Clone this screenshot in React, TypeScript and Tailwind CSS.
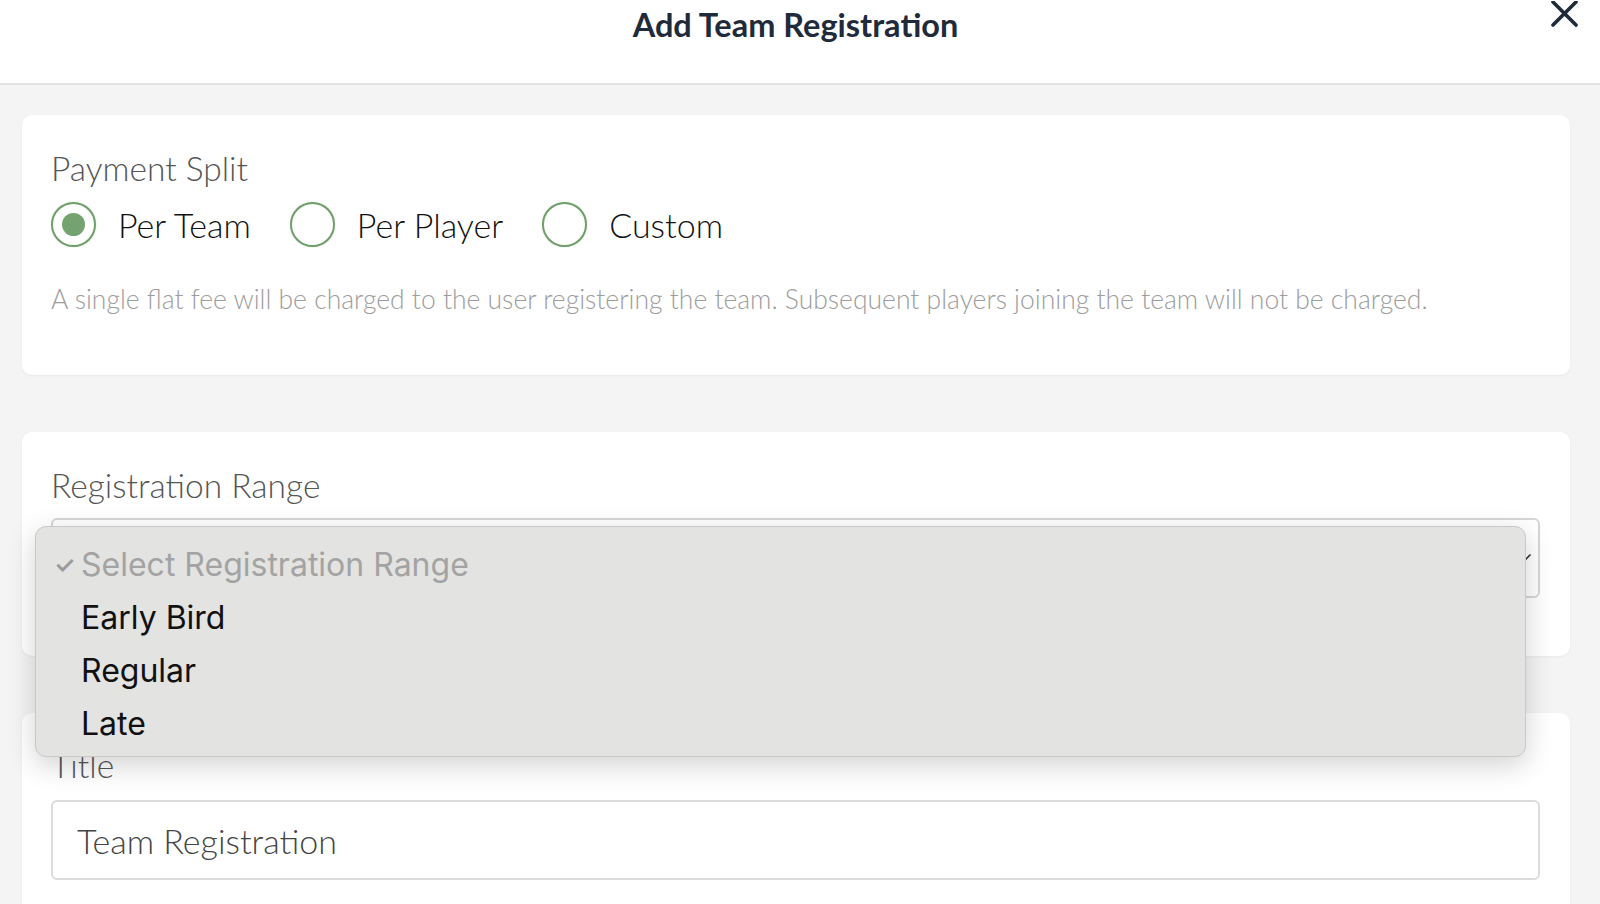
import React from "react";

function Radio({ checked, label }: { checked?: boolean; label: string }) {
  return (
    <div className="flex items-center gap-[22px]">
      <div className="w-[45px] h-[45px] rounded-full border-2 border-[#6f9f69] bg-white flex items-center justify-center shadow-[0_0_2px_rgba(0,0,0,0.15)]">
        {checked && <div className="w-[23px] h-[23px] rounded-full bg-[#74a36f]" />}
      </div>
      <span className="text-[34px] leading-[40px] text-[#111] font-light">{label}</span>
    </div>
  );
}

export default function App() {
  return (
    <div
      className="w-[1600px] h-[904px] overflow-hidden bg-[#f4f4f4] relative"
      style={{ fontFamily: "Lato, 'Open Sans', sans-serif" }}
    >
      <header className="relative h-[85px] bg-white border-b-2 border-[#e2e2e2] flex justify-center">
        <h1 className="mt-[6px] mr-[9px] text-[32.5px] leading-[38px] font-bold text-[#1f2b3b]">Add Team Registration</h1>
        <svg className="absolute right-[22px] top-[1px]" width="27" height="26" viewBox="0 0 27 26">
          <path d="M2 1 L25 24 M25 1 L2 24" stroke="#1f2b3b" strokeWidth="3.6" strokeLinecap="round" />
        </svg>
      </header>

      <main className="px-[22px] pt-[30px] pr-[30px] flex flex-col gap-[57px]">
        <section className="bg-white rounded-[10px] shadow-[0_1px_3px_rgba(0,0,0,0.05)] pl-[29px] pt-[35px] pb-[61px] h-[260px]">
          <div className="text-[33.5px] leading-[36px] text-[#555] font-light">Payment Split</div>
          <div className="mt-[16px] flex items-center gap-[39px]">
            <Radio checked label="Per Team" />
            <Radio label="Per Player" />
            <Radio label="Custom" />
          </div>
          <p className="mt-[37px] text-[26.5px] leading-[30px] text-[#9d9d9d] font-light">
            A single flat fee will be charged to the user registering the team. Subsequent players joining the team will not be charged.
          </p>
        </section>

        <section className="bg-white rounded-[10px] shadow-[0_1px_3px_rgba(0,0,0,0.05)] pl-[29px] pr-[30px] pt-[35px] h-[224px]">
          <div className="text-[33.5px] leading-[36px] text-[#555] font-light">Registration Range</div>
          <div className="relative mt-[15px]">
            <div className="h-[80px] rounded-[6px] border-2 border-[#d6d6d6] bg-white relative">
              <svg className="absolute right-[6px] top-[33px]" width="14" height="9" viewBox="0 0 14 9">
                <path d="M1.5 1.5 L7 7 L12.5 1.5" stroke="#333" strokeWidth="1.6" fill="none" />
              </svg>
            </div>
            <div
              className="absolute left-[-16px] right-[14px] top-[8px] h-[231px] z-10 rounded-[11px] bg-[#e3e3e2] border border-[#c9c9c9] shadow-[0_8px_28px_rgba(0,0,0,0.18)] py-[11px]"
              style={{ fontFamily: "Inter, 'Noto Sans', sans-serif" }}
            >
              <div className="relative h-[53px] flex items-center pl-[45px] text-[32px] text-[#a3a3a3]">
                <span className="absolute left-[18px] text-[24px] font-semibold text-[#9a9a9a]">✓</span>
                Select Registration Range
              </div>
              <div className="h-[53px] flex items-center pl-[45px] text-[32px] text-[#111]">Early Bird</div>
              <div className="h-[53px] flex items-center pl-[45px] text-[32px] text-[#111]">Regular</div>
              <div className="h-[53px] flex items-center pl-[45px] text-[32px] text-[#111]">Late</div>
            </div>
          </div>
        </section>

        <section className="bg-white rounded-[10px] shadow-[0_1px_3px_rgba(0,0,0,0.05)] pl-[29px] pr-[30px] pt-[34px] h-[260px]">
          <div className="text-[33.5px] leading-[36px] text-[#555] font-light">Title</div>
          <div className="mt-[17px] h-[80px] rounded-[6px] border-2 border-[#dcdcdc] bg-white flex items-center pl-[24px] text-[34px] text-[#444] font-light">
            Team Registration
          </div>
        </section>
      </main>
    </div>
  );
}
